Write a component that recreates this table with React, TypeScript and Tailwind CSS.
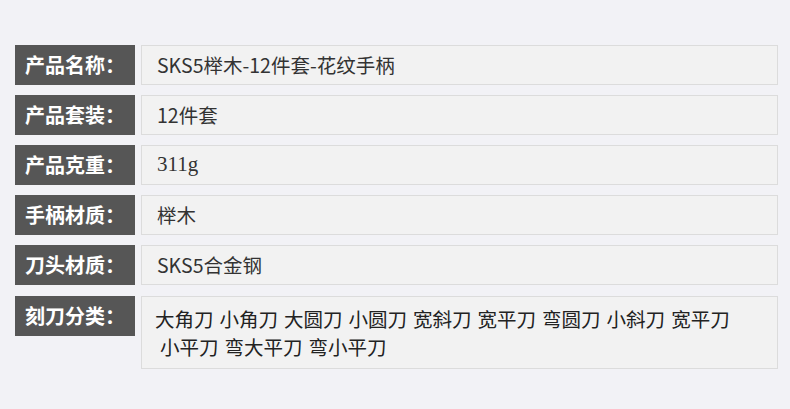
const rows: { label: string; value: React.ReactNode }[] = [
  { label: "产品名称：", value: "SKS5榉木-12件套-花纹手柄" },
  { label: "产品套装：", value: "12件套" },
  {
    label: "产品克重：",
    value: <span className="font-['Liberation_Serif',serif] text-[21px]">311g</span>,
  },
  { label: "手柄材质：", value: "榉木" },
  { label: "刀头材质：", value: "SKS5合金钢" },
];

const knives1 = ["大角刀", "小角刀", "大圆刀", "小圆刀", "宽斜刀", "宽平刀", "弯圆刀", "小斜刀", "宽平刀"];
const knives2 = ["小平刀", "弯大平刀", "弯小平刀"];

function Label({ text }: { text: string }) {
  return (
    <div className="w-[120px] h-[40px] shrink-0 bg-[#565656] flex items-center pl-[10px] text-white text-[20px] font-bold">
      {text}
    </div>
  );
}

export default function App() {
  return (
    <div className="w-[790px] h-[409px] bg-[#f2f2f6] pt-[45px] pl-[15px] pr-[12px] font-['Noto_Sans_CJK_SC',sans-serif] flex flex-col gap-[10px]">
      {rows.map((r) => (
        <div key={r.label} className="flex gap-[6px]">
          <Label text={r.label} />
          <div className="flex-1 h-[40px] bg-[#f2f2f2] border border-[#dcdcdc] flex items-center pl-[15px] text-[19.5px] text-[#333]">
            {r.value}
          </div>
        </div>
      ))}
      <div className="flex gap-[6px] items-start mt-[1px]">
        <Label text="刻刀分类：" />
        <div className="flex-1 h-[73px] bg-[#f2f2f2] border border-[#dcdcdc] pl-[13px] pt-[8px] text-[19.5px] leading-[28px] text-[#222]">
          <div className="flex gap-x-[6px]">
            {knives1.map((k, i) => (
              <span key={i}>{k}</span>
            ))}
          </div>
          <div className="flex gap-x-[6px] pl-[5px]">
            {knives2.map((k, i) => (
              <span key={i}>{k}</span>
            ))}
          </div>
        </div>
      </div>
    </div>
  );
}
